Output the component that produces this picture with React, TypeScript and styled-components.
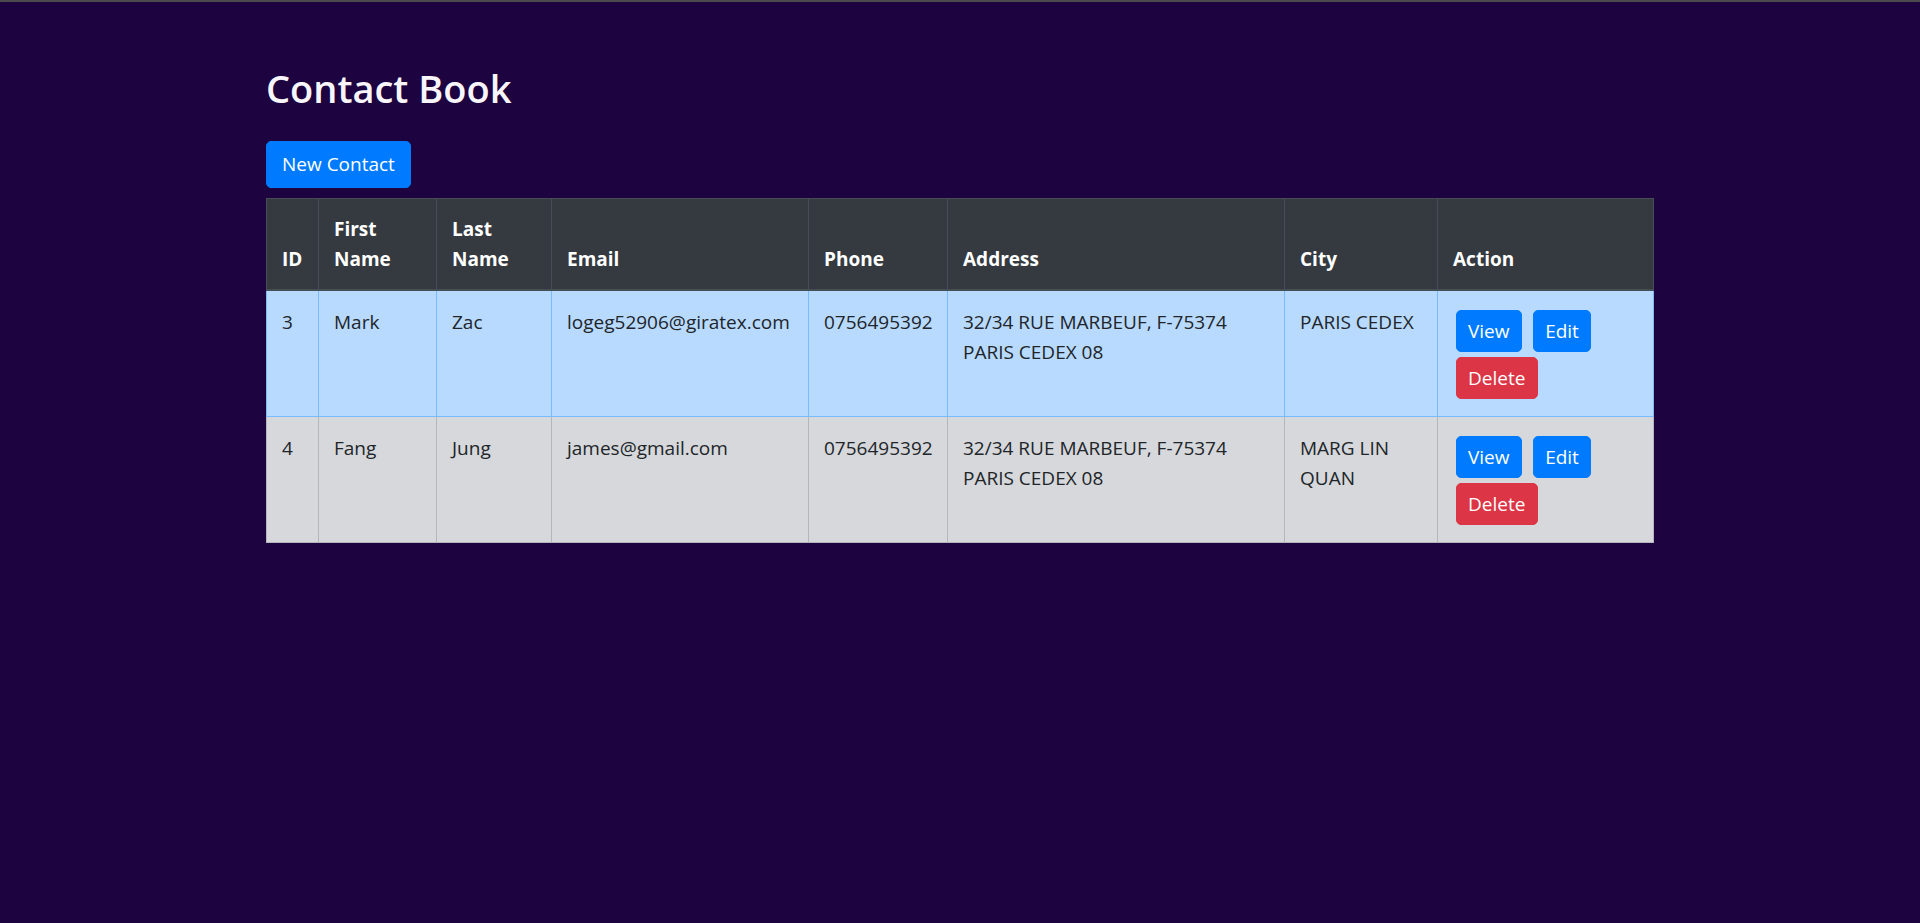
import React from "react";
import styled, { createGlobalStyle, css } from "styled-components";

const GlobalStyle = createGlobalStyle`
  html, body {
    margin: 0;
    padding: 0;
    background: #1e0341;
  }
  body {
    border-top: 2px solid #4b4b4b;
    font-family: "Open Sans", "Noto Sans", "Liberation Sans", sans-serif;
    font-size: 19px;
    line-height: 30px;
    color: #212529;
    min-height: 921px;
  }
`;

const Container = styled.main`
  width: 1388px;
  margin: 64px auto 0;
`;

const Title = styled.h2`
  margin: 0 0 29px;
  font-size: 38px;
  font-weight: 600;
  line-height: 1.2;
  color: #f8f6fb;
`;

const NewButton = styled.button`
  display: inline-block;
  font-family: inherit;
  font-size: 19px;
  line-height: 30px;
  padding: 7.5px 15px;
  border: 1px solid #007bff;
  border-radius: 5px;
  background: #007bff;
  color: #fff;
  cursor: pointer;
  margin-bottom: 10px;
`;

const Table = styled.table`
  width: 1387px;
  table-layout: fixed;
  border-collapse: collapse;
  border: 1px solid #454d55;
`;

const HeadCell = styled.th`
  background: #343a40;
  color: #fff;
  font-weight: 700;
  text-align: left;
  vertical-align: bottom;
  padding: 15px;
  border: 1px solid #454d55;
  border-bottom: 2px solid #454d55;
`;

type Tone = "primary" | "secondary";

const tones: Record<Tone, { bg: string; border: string }> = {
  primary: { bg: "#b8daff", border: "#7abaff" },
  secondary: { bg: "#d6d8db", border: "#b3b7bb" },
};

const Row = styled.tr<{ $tone: Tone }>`
  background: ${(p) => tones[p.$tone].bg};
`;

const Cell = styled.td<{ $tone: Tone }>`
  vertical-align: top;
  padding: 16px 15px 14px;
  border: 1px solid ${(p) => tones[p.$tone].border};
  overflow-wrap: normal;
`;

const ActionGroup = styled.div`
  display: flex;
  flex-wrap: wrap;
  column-gap: 10.6px;
  row-gap: 5px;
  margin: 3px 0 3px 2.5px;
`;

type Variant = "primary" | "danger";

const ActionButton = styled.button<{ $variant: Variant }>`
  font-family: inherit;
  font-size: 19px;
  line-height: 30px;
  padding: 5px 11.5px;
  border-radius: 5px;
  color: #fff;
  cursor: pointer;
  ${(p) =>
    p.$variant === "primary"
      ? css`
          background: #007bff;
          border: 1px solid #007bff;
        `
      : css`
          background: #dc3545;
          border: 1px solid #dc3545;
        `}
`;

const columns = [
  { label: "ID", width: 52 },
  { label: "First Name", width: 118 },
  { label: "Last Name", width: 115 },
  { label: "Email", width: 257 },
  { label: "Phone", width: 139 },
  { label: "Address", width: 337 },
  { label: "City", width: 153 },
  { label: "Action", width: 216 },
];

const contacts: Array<{
  id: number;
  first: string;
  last: string;
  email: string;
  phone: string;
  address: string;
  city: string;
  tone: Tone;
}> = [
  {
    id: 3,
    first: "Mark",
    last: "Zac",
    email: "logeg52906@giratex.com",
    phone: "0756495392",
    address: "32/34 RUE MARBEUF, F-75374 PARIS CEDEX 08",
    city: "PARIS CEDEX",
    tone: "primary",
  },
  {
    id: 4,
    first: "Fang",
    last: "Jung",
    email: "james@gmail.com",
    phone: "0756495392",
    address: "32/34 RUE MARBEUF, F-75374 PARIS CEDEX 08",
    city: "MARG LIN QUAN",
    tone: "secondary",
  },
];

export default function App() {
  return (
    <>
      <GlobalStyle />
      <Container>
        <Title>Contact Book</Title>
        <NewButton>New Contact</NewButton>
        <Table>
          <colgroup>
            {columns.map((c) => (
              <col key={c.label} style={{ width: c.width }} />
            ))}
          </colgroup>
          <thead>
            <tr>
              {columns.map((c) => (
                <HeadCell key={c.label}>{c.label}</HeadCell>
              ))}
            </tr>
          </thead>
          <tbody>
            {contacts.map((c) => (
              <Row key={c.id} $tone={c.tone}>
                <Cell $tone={c.tone}>{c.id}</Cell>
                <Cell $tone={c.tone}>{c.first}</Cell>
                <Cell $tone={c.tone}>{c.last}</Cell>
                <Cell $tone={c.tone}>{c.email}</Cell>
                <Cell $tone={c.tone}>{c.phone}</Cell>
                <Cell $tone={c.tone}>{c.address}</Cell>
                <Cell $tone={c.tone}>{c.city}</Cell>
                <Cell $tone={c.tone}>
                  <ActionGroup>
                    <ActionButton $variant="primary">View</ActionButton>
                    <ActionButton $variant="primary">Edit</ActionButton>
                    <ActionButton $variant="danger">Delete</ActionButton>
                  </ActionGroup>
                </Cell>
              </Row>
            ))}
          </tbody>
        </Table>
      </Container>
    </>
  );
}
